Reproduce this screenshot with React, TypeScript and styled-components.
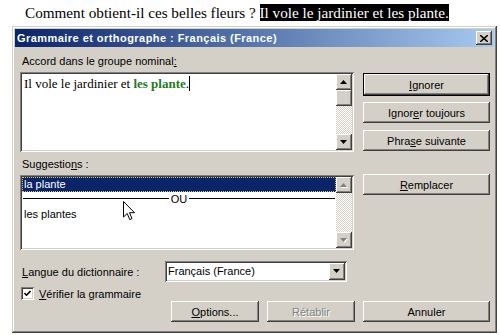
import React from 'react'
import styled, { createGlobalStyle } from 'styled-components'

const GlobalStyle = createGlobalStyle`
  html, body {
    margin: 0;
    padding: 0;
    background: #fff;
  }
  body {
    width: 500px;
    height: 335px;
    overflow: hidden;
  }
`

const face = '#d4d0c8'
const raised = `inset -1px -1px #404040, inset 1px 1px #fff, inset -2px -2px #808080, inset 2px 2px ${face}`
const sunken = `inset 1px 1px #808080, inset -1px -1px #fff, inset 2px 2px #404040, inset -2px -2px ${face}`

const Page = styled.div`
  width: 500px;
  height: 335px;
  overflow: hidden;
`

const Sentence = styled.p`
  margin: 0;
  padding: 4px 0 0 25px;
  height: 22px;
  font-family: 'Liberation Serif', serif;
  font-size: 15.2px;
  line-height: 18px;
  color: #000;
  white-space: nowrap;
`

const Selected = styled.span`
  background: #000;
  color: #fff;
`

const Dialog = styled.div`
  margin-left: 12px;
  width: 485px;
  height: 307px;
  box-sizing: border-box;
  padding: 3px;
  background: ${face};
  box-shadow: inset -1px -1px #404040, inset 1px 1px ${face}, inset -2px -2px #808080, inset 2px 2px #fff;
  font-family: 'Liberation Sans', Arial, sans-serif;
  font-size: 11px;
  color: #000;
`

const TitleBar = styled.div`
  height: 18px;
  display: flex;
  align-items: center;
  justify-content: space-between;
  padding: 0 2px 0 2px;
  background: linear-gradient(to right, #0a246a, #a6caf0);
`

const TitleText = styled.span`
  color: #fff;
  font-weight: bold;
  font-size: 11px;
  letter-spacing: 0.45px;
  white-space: nowrap;
`

const CloseButton = styled.div`
  width: 16px;
  height: 14px;
  display: flex;
  align-items: center;
  justify-content: center;
  background: ${face};
  box-shadow: ${raised};
`

const Body = styled.div`
  padding: 8px 4px 0 5px;
`

const Main = styled.div`
  display: flex;
  gap: 9px;
`

const LeftCol = styled.div`
  width: 334px;
  display: flex;
  flex-direction: column;
`

const RightCol = styled.div`
  width: 127px;
  padding-top: 18px;
  display: flex;
  flex-direction: column;
`

const FieldLabel = styled.div<{ $top?: number }>`
  height: 13px;
  line-height: 13px;
  padding-left: 2px;
  margin-top: ${(p) => p.$top ?? 0}px;
  margin-bottom: 4px;
  white-space: nowrap;
`

const Field = styled.div<{ $height: number }>`
  height: ${(p) => p.$height}px;
  display: flex;
  background: #fff;
  box-shadow: ${sunken};
  padding: 2px;
  box-sizing: border-box;
`

const FieldContent = styled.div`
  flex: 1;
  position: relative;
  overflow: hidden;
`

const SentenceText = styled.div`
  padding: 2px 0 0 2px;
  font-family: 'Liberation Serif', serif;
  font-size: 13px;
  line-height: 15px;
  white-space: nowrap;
`

const Flagged = styled.span`
  color: #1f7a1f;
  font-weight: bold;
`

const Caret = styled.span`
  display: inline-block;
  width: 1px;
  height: 15px;
  background: #000;
  vertical-align: top;
`

const ScrollBar = styled.div`
  width: 16px;
  display: flex;
  flex-direction: column;
`

const Track = styled.div`
  flex: 1;
  background-color: #fff;
  background-image: conic-gradient(${face} 25%, #fff 0 50%, ${face} 0 75%, #fff 0);
  background-size: 2px 2px;
`

const ScrollButton = styled.div`
  width: 16px;
  height: 16px;
  display: flex;
  align-items: center;
  justify-content: center;
  background: ${face};
  box-shadow: ${raised};
`

const ListRow = styled.div<{ $selected?: boolean }>`
  height: 15px;
  line-height: 15px;
  padding-left: 2px;
  white-space: nowrap;
  background: ${(p) => (p.$selected ? '#0a246a' : 'transparent')};
  color: ${(p) => (p.$selected ? '#fff' : '#000')};
  outline: ${(p) => (p.$selected ? '1px dotted #d6c86a' : 'none')};
  outline-offset: -1px;
`

const Separator = styled.div`
  display: flex;
  align-items: center;
  gap: 2px;
  height: 13px;
  padding: 0 1px;
  margin-bottom: 2px;
  &::before,
  &::after {
    content: '';
    flex: 1;
    height: 1px;
    background: #000;
  }
`

const Button = styled.div<{ $width?: number; $default?: boolean; $disabled?: boolean; $gap?: number }>`
  width: ${(p) => p.$width ?? 127}px;
  height: ${(p) => (p.$default ? 23 : 21)}px;
  margin-bottom: ${(p) => p.$gap ?? 0}px;
  box-sizing: border-box;
  display: flex;
  align-items: center;
  justify-content: center;
  background: ${face};
  border: ${(p) => (p.$default ? '1px solid #000' : 'none')};
  box-shadow: ${raised};
  white-space: nowrap;
  color: ${(p) => (p.$disabled ? '#808080' : '#000')};
  text-shadow: ${(p) => (p.$disabled ? '1px 1px #fff' : 'none')};
`

const LangRow = styled.div`
  display: flex;
  align-items: center;
  margin-top: 11px;
`

const LangLabel = styled.div`
  width: 143px;
  padding-left: 2px;
  white-space: nowrap;
`

const Combo = styled.div`
  width: 182px;
  height: 21px;
  box-sizing: border-box;
  padding: 2px;
  display: flex;
  background: #fff;
  box-shadow: ${sunken};
`

const ComboText = styled.div`
  flex: 1;
  line-height: 17px;
  padding-left: 1px;
`

const ComboButton = styled(ScrollButton)`
  height: 17px;
`

const CheckRow = styled.div`
  display: flex;
  align-items: center;
  gap: 5px;
  margin-top: 5px;
  padding-left: 1px;
  height: 13px;
`

const CheckBox = styled.div`
  width: 13px;
  height: 13px;
  display: flex;
  align-items: center;
  justify-content: center;
  background: #fff;
  box-shadow: ${sunken};
`

const ButtonRow = styled.div`
  display: flex;
  justify-content: flex-end;
  gap: 8px;
  margin-top: 1px;
`

const Pointer = styled.svg`
  position: absolute;
  left: 101px;
  top: 24px;
`

const Arrow = ({ dir, disabled }: { dir: 'up' | 'down'; disabled?: boolean }) => (
  <svg width="8" height="5" viewBox="0 0 8 5">
    {disabled && (
      <polygon points={dir === 'up' ? '4.5,1 8,5 1,5' : '1,1 8,1 4.5,5'} fill="#fff" />
    )}
    <polygon
      points={dir === 'up' ? '3.5,0 7,4 0,4' : '0,0 7,0 3.5,4'}
      fill={disabled ? '#808080' : '#000'}
    />
  </svg>
)

const App = () => {
  return (
    <Page>
      <GlobalStyle />
      <Sentence>
        Comment obtient-il ces belles fleurs ? <Selected>Il vole le jardinier et les plante.</Selected>
      </Sentence>
      <Dialog>
        <TitleBar>
          <TitleText>Grammaire et orthographe : Français (France)</TitleText>
          <CloseButton>
            <svg width="8" height="7" viewBox="0 0 8 7">
              <path d="M0 0 L8 7 M8 0 L0 7" stroke="#000" strokeWidth="1.6" />
            </svg>
          </CloseButton>
        </TitleBar>
        <Body>
          <Main>
            <LeftCol>
              <FieldLabel>
                Accord dans le groupe nominal<u>:</u>
              </FieldLabel>
              <Field $height={80}>
                <FieldContent>
                  <SentenceText>
                    Il vole le jardinier et <Flagged>les plante</Flagged>.<Caret />
                  </SentenceText>
                </FieldContent>
                <ScrollBar>
                  <ScrollButton>
                    <Arrow dir="up" />
                  </ScrollButton>
                  <ScrollButton />
                  <Track />
                  <ScrollButton>
                    <Arrow dir="down" />
                  </ScrollButton>
                </ScrollBar>
              </Field>
              <FieldLabel $top={6}>
                Suggestio<u>n</u>s :
              </FieldLabel>
              <Field $height={75}>
                <FieldContent>
                  <ListRow $selected>la plante</ListRow>
                  <Separator>OU</Separator>
                  <ListRow>les plantes</ListRow>
                  <Pointer width="13" height="20" viewBox="0 0 13 20">
                    <path
                      d="M0.5 0.5 L0.5 16 L4.2 12.5 L6.8 18.6 L9 17.6 L6.5 11.7 L11.5 11.7 Z"
                      fill="#fff"
                      stroke="#000"
                      strokeWidth="1"
                    />
                  </Pointer>
                </FieldContent>
                <ScrollBar>
                  <ScrollButton>
                    <Arrow dir="up" disabled />
                  </ScrollButton>
                  <Track />
                  <ScrollButton>
                    <Arrow dir="down" disabled />
                  </ScrollButton>
                </ScrollBar>
              </Field>
            </LeftCol>
            <RightCol>
              <Button $default $gap={6}>
                <span>
                  <u>I</u>gnorer
                </span>
              </Button>
              <Button $gap={7}>
                <span>
                  Ignor<u>e</u>r toujours
                </span>
              </Button>
              <Button $gap={23}>
                <span>
                  Phra<u>s</u>e suivante
                </span>
              </Button>
              <Button>
                <span>
                  <u>R</u>emplacer
                </span>
              </Button>
            </RightCol>
          </Main>
          <LangRow>
            <LangLabel>
              <u>L</u>angue du dictionnaire :
            </LangLabel>
            <Combo>
              <ComboText>Français (France)</ComboText>
              <ComboButton>
                <Arrow dir="down" />
              </ComboButton>
            </Combo>
          </LangRow>
          <CheckRow>
            <CheckBox>
              <svg width="7" height="7" viewBox="0 0 7 7">
                <path d="M0.5 3 L2.5 5.2 L6.5 1" stroke="#000" strokeWidth="1.6" fill="none" />
              </svg>
            </CheckBox>
            <span>
              <u>V</u>érifier la grammaire
            </span>
          </CheckRow>
          <ButtonRow>
            <Button $width={88}>
              <span>
                <u>O</u>ptions...
              </span>
            </Button>
            <Button $width={88} $disabled>
              Rétablir
            </Button>
            <Button>Annuler</Button>
          </ButtonRow>
        </Body>
      </Dialog>
    </Page>
  )
}

export default App
